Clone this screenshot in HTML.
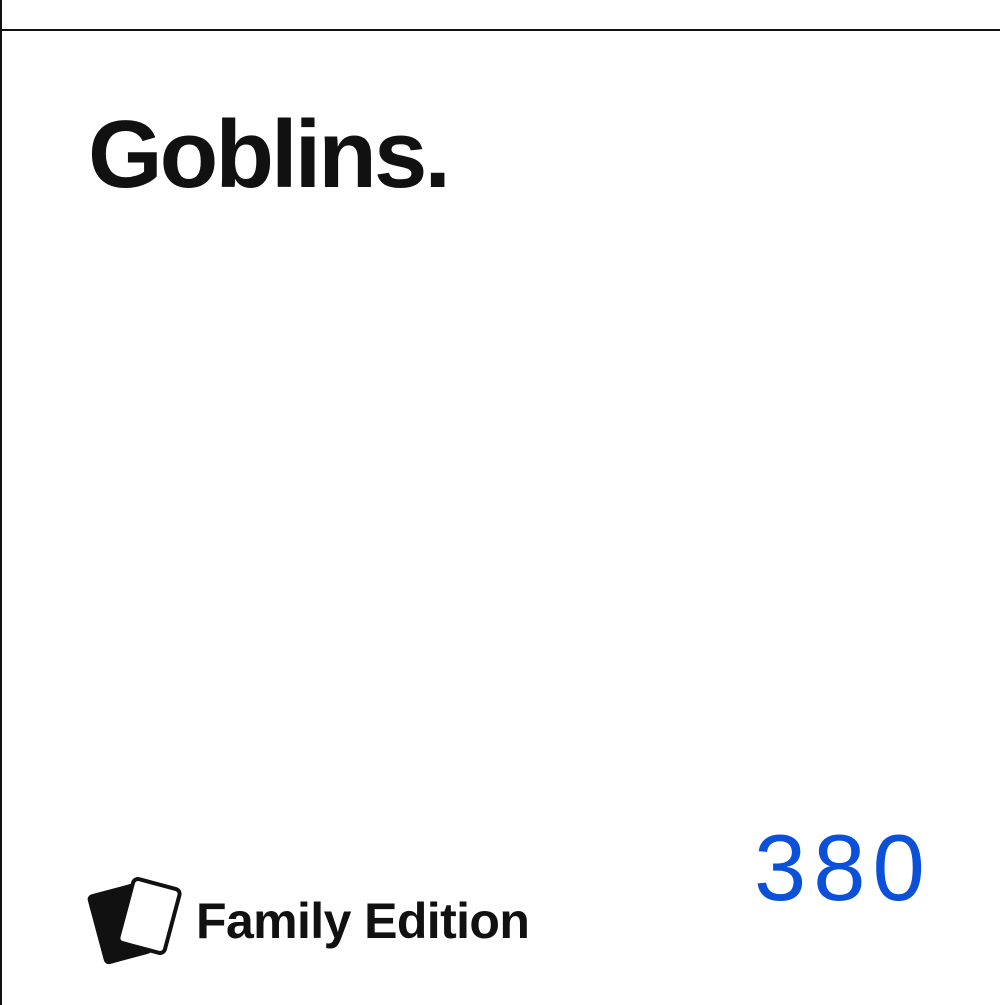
<!DOCTYPE html>
<html><head><style>
html,body{margin:0;padding:0;background:#fff;width:1000px;height:1005px;overflow:hidden;position:relative}
.vl{position:absolute;left:0;top:0;width:2px;height:1005px;background:#111}
.hl{position:absolute;left:0;top:29px;width:1000px;height:2px;background:#111}
.t{position:absolute;left:88px;top:107px;font:bold 96px "Liberation Sans",sans-serif;color:#111;letter-spacing:-3px;line-height:1}
.n{position:absolute;left:754px;top:821px;font:300 94px "Liberation Sans",sans-serif;color:#0b50d8;line-height:1;letter-spacing:7px}
.fe{position:absolute;left:196px;top:896px;font:bold 50px "Liberation Sans",sans-serif;color:#111;letter-spacing:-0.6px;line-height:1}
svg{position:absolute;left:85px;top:875px}
</style></head><body>
<div class="vl"></div><div class="hl"></div>
<div class="t">Goblins.</div>
<div class="n">380</div>
<svg width="100" height="95" viewBox="0 0 100 95">
<rect x="10" y="13" width="50" height="72" rx="5" fill="#111" transform="rotate(-15 35 49)"/>
<rect x="40" y="8" width="48" height="66" rx="5" fill="#fff" stroke="#111" stroke-width="4" transform="rotate(15 64 41)"/>
</svg>
<div class="fe">Family Edition</div>
</body></html>
